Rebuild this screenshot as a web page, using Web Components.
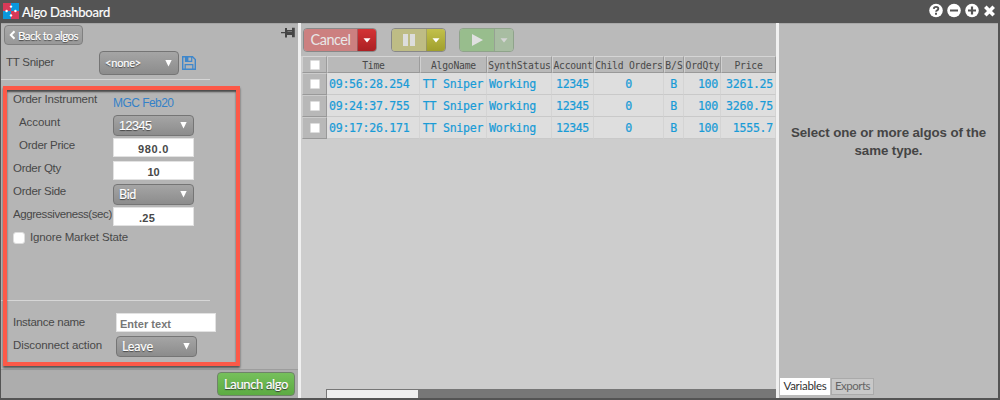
<!DOCTYPE html>
<html lang="en"><head><meta charset="utf-8"><title>Algo Dashboard</title>
<style>html,body{margin:0;width:1000px;height:400px;overflow:hidden;background:#545454;font-family:"Liberation Sans",Arial,sans-serif}</style></head>
<body><algo-dashboard></algo-dashboard>
<script>
const define=(name,html,setup)=>customElements.define(name,class extends HTMLElement{
  connectedCallback(){
    if(this.shadowRoot)return;
    const t=document.createElement('template');
    t.innerHTML=typeof html==='function'?html(this):html;
    this.attachShadow({mode:'open'}).append(t.content.cloneNode(true));
    if(setup)setup(this);
  }
});

// A single line of text tracked to an exact width (w, in px).
define('fit-text','<style>:host{display:inline-block;white-space:pre}</style><slot></slot>',el=>{
  const w=+el.getAttribute('w'),n=el.textContent.length;
  if(!w||!n)return;
  const r=document.createElement('span');
  const c=getComputedStyle(el);
  r.style.cssText='position:absolute;visibility:hidden;white-space:pre';
  r.style.font=c.font;r.textContent=el.textContent;
  document.body.append(r);
  const s=(w-r.getBoundingClientRect().width)/n;
  r.remove();
  el.style.letterSpacing=s.toFixed(3)+'px';
});

define('title-bar',`<style>
:host{display:flex;height:23px;background:#545454;color:#fff;align-items:flex-start;box-sizing:border-box;padding:0 3px}
.logo{margin-top:3px;width:16px;height:16px}
fit-text{font:13px/22px Lato,sans-serif;margin:1px 0 0 3px;-webkit-text-stroke:.2px #fff}
.ctl{margin-left:auto;width:70px;height:22px}
</style>
<svg class="logo" viewBox="0 0 16 16"><path fill="#d73a58" d="M0 0h8v8H0zM8 8h8v8H8z"/><path fill="#0b98dc" d="M8 0h8v8H8zM0 8h8v8H0z"/><g fill="#fff"><circle cx="8" cy="3.6" r="1.2"/><circle cx="3.6" cy="8" r="1.2"/><circle cx="12.4" cy="8" r="1.2"/><circle cx="8" cy="12.4" r="1.2"/></g></svg>
<fit-text w="88">Algo Dashboard</fit-text>
<svg class="ctl" viewBox="927 0 70 22"><g fill="#fff"><circle cx="936" cy="10.5" r="6.8"/><circle cx="954" cy="10.5" r="6.8"/><circle cx="972" cy="10.5" r="6.8"/></g>
<path d="M950 10.5h8M968 10.5h8M972 6.5v8" stroke="#545454" stroke-width="2.2"/>
<path d="M933.8 8.9q.2-2 2.2-2 2.3 0 2.3 1.8 0 1-1.2 1.6-1 .5-1 1.5" fill="none" stroke="#545454" stroke-width="1.9"/><path d="M935 12.8h2v1.9h-2z" fill="#545454"/>
<path d="M985.3 6.8l8.4 8.4M993.7 6.8l-8.4 8.4" stroke="#fff" stroke-width="3.6"/></svg>`);

define('drop-select',`<style>
:host{display:flex;box-sizing:border-box;width:81px;height:21px;border:1px solid #757575;border-radius:4px;background:linear-gradient(#a5a5a5,#8c8c8c);color:#fff;align-items:center;justify-content:space-between;padding:0 6px 0 5px;font:12.5px/18px Lato,sans-serif;-webkit-text-stroke:.2px #fff;text-shadow:0 1px 1px #444}
svg{width:7px;height:7px}</style><slot></slot><svg viewBox="0 0 7 7"><path d="M.3 0h6.4L3.5 6.5z" fill="#fff"/></svg>`);

define('text-field',`<style>
:host{display:flex;box-sizing:border-box;width:81px;height:19px;background:#fff;border:1px solid #e2e2e2;color:#484848;font:bold 11px/19px "Liberation Sans",sans-serif;justify-content:center;padding-top:1px}
</style><slot></slot>`);

define('check-box',`<style>:host{display:block;box-sizing:border-box;width:var(--s,12px);height:var(--s,12px);background:#fff;border:1px solid #ddd;border-radius:var(--r,3px)}</style>`);

define('field-row',el=>`<style>
:host{display:grid;grid-template-columns:100px 1fr;height:23px;color:#484848;font:11.5px/23px "Liberation Sans",sans-serif}
.l{overflow:hidden;width:99px;white-space:nowrap;padding-left:${el.hasAttribute('sub')?6:0}px;box-sizing:border-box}
.c{padding-top:4px;height:23px;box-sizing:border-box}
</style><div class="l"><fit-text w="${el.getAttribute('w')}">${el.getAttribute('label')}</fit-text></div><div class="c"><slot></slot></div>`);

define('algo-form',`<style>
:host{display:flex;flex-direction:column;position:relative;box-sizing:border-box;width:297px;height:375px;background:#b5b5b5;border-top:1px solid #a5a5a5;color:#484848;font-size:11.5px}
.top{height:22px;display:flex;justify-content:space-between;padding:1px 3px 0 3px;box-sizing:border-box}
.back{box-sizing:border-box;width:79px;height:20px;border:1px solid #808080;border-radius:4px;background:linear-gradient(#a8a8a8,#989898);display:flex;align-items:center;gap:2px;padding-left:4px;color:#fff;font:11.5px/17px Lato,sans-serif;text-shadow:0 1px 1px #444;-webkit-text-stroke:.2px #fff}
.pin{width:14px;height:11px;margin-top:2px}
.algo{height:33px;display:grid;grid-template-columns:93px 80px 20px;padding:5px 0 0 5px;box-sizing:border-box;line-height:22px}
.algo drop-select{height:24px;width:80px}
.save{width:14px;height:14px;margin:5px 0 0 3px}
hr{border:0;margin:0;width:209px;height:1px;background:#d6d6d6}
.fields{margin:8px 0 0 12px}
.ign{display:flex;height:23px;line-height:23px;gap:5px;align-items:center}
.more{margin:10px 0 0 12px}
.hr2{margin-top:51px}
.more field-row{grid-template-columns:103px 1fr}
.foot{margin-top:auto;height:29px;box-sizing:border-box;background:#adadad;border-top:1px solid #9d9d9d;display:flex;justify-content:flex-end;padding:2px 3px 0}
.go{box-sizing:border-box;width:78px;height:24px;border:1px solid #6f8369;border-radius:4px;background:linear-gradient(#76c05c,#5cab42);color:#fff;font:13px/22px Lato,sans-serif;text-shadow:0 1px 1px #333;-webkit-text-stroke:.2px #fff;text-align:center;white-space:nowrap}
.mark{position:absolute;left:2px;top:62px;width:237px;height:280px;box-sizing:border-box;border:4px solid #fd5948;box-shadow:0 2px 2px #0008,inset 0 2px 2px #0009;pointer-events:none}
</style>
<div class="top"><div class="back"><svg width="7" height="10" viewBox="0 0 7 10"><path d="M5.5 1.2L1.8 5l3.7 3.8" fill="none" stroke="#fff" stroke-width="2"/></svg><fit-text w="60">Back to algos</fit-text></div>
<svg class="pin" viewBox="0 0 14 11"><path d="M0 5h4V1h2v2h5V.8h2.8v9.4H11V8H6v2.5H4V6.2H0z" fill="#454545"/><path d="M6.5 4.5H11" stroke="#777"/></svg></div>
<div class="algo"><fit-text w="48">TT Sniper</fit-text><drop-select><fit-text w="36" style="font-size:11px">&lt;none&gt;</fit-text></drop-select>
<svg class="save" viewBox="0 0 14 14"><path d="M.7.7h9.8l2.8 2.8v9.8H.7z" fill="none" stroke="#3f87cb" stroke-width="1.4"/><path d="M3.5.7v4.6h6.2V.7M3.2 13.3V8.6h7.6v4.7" fill="none" stroke="#3f87cb" stroke-width="1.2"/><path d="M3.7 1h2.7v4H3.7z" fill="#3f87cb"/></svg></div>
<hr>
<div class="fields">
<field-row label="Order Instrument" w="84"><fit-text w="60.5" style="color:#3481c8;font-size:12px;line-height:18px">MGC Feb20</fit-text></field-row>
<field-row label="Account" w="41" sub><drop-select><fit-text w="32.5" style="font:12.5px 'Liberation Sans',sans-serif">12345</fit-text></drop-select></field-row>
<field-row label="Order Price" w="56" sub><text-field><fit-text w="31">980.0</fit-text></text-field></field-row>
<field-row label="Order Qty" w="48"><text-field><fit-text w="12">10</fit-text></text-field></field-row>
<field-row label="Order Side" w="53"><drop-select><fit-text w="17">Bid</fit-text></drop-select></field-row>
<field-row label="Aggressiveness(sec)" w="98.8"><text-field><fit-text w="16" style="margin-right:13px">.25</fit-text></text-field></field-row>
<div class="ign"><check-box></check-box><fit-text w="98">Ignore Market State</fit-text></div>
</div>
<hr class="hr2"><div class="more">
<field-row label="Instance name" w="72"><text-field style="width:100px;margin-top:-2px;justify-content:flex-start;padding-left:3px;color:#777"><fit-text w="51">Enter text</fit-text></text-field></field-row>
<field-row label="Disconnect action" w="89"><drop-select style="margin-top:-2px"><fit-text w="31">Leave</fit-text></drop-select></field-row>
</div>
<div class="foot"><div class="go"><fit-text w="64">Launch algo</fit-text></div></div>
<div class="mark"></div>`);

define('split-button',el=>`<style>
:host{display:grid;grid-template-columns:${el.getAttribute('main')||34}px 1fr;box-sizing:border-box;height:24px;border:1px solid #888;border-radius:4px;overflow:hidden;color:#e8e8e8}
.a{background:var(--a);display:flex;align-items:center;justify-content:center}.b{background:var(--b);border-left:1px solid #8888;display:flex;align-items:center;justify-content:center}
</style><div class="a"><slot></slot></div><div class="b"><svg width="8" height="5" viewBox="0 0 8 5"><path d="M.5.3h7L4 4.6z" fill="var(--c,#fff)"/></svg></div>`);

const cols=[['',25],['Time',93,22.5],['AlgoName',67,45],['SynthStatus',65,62.5],['Account',42,39],['Child Orders',70,67.5],['B/S',20,17.5],['OrdQty',37,34],['Price',55,28]];
const rows=[['09:56:28.254','3261.25'],['09:24:37.755','3260.75'],['09:17:26.171','1555.7']].map(([t,p])=>[t,'TT Sniper','Working','12345','0','B','100',p]);
define('order-grid',`<style>
:host{display:grid;grid-template-columns:${cols.map(c=>c[1]+'px').join(' ')};grid-template-rows:17px repeat(3,22px);font-family:"DejaVu Sans Mono",monospace}
div{box-sizing:border-box;display:flex;align-items:center;justify-content:center;min-width:0;white-space:nowrap}
.h{background:#b9b9b9;border:solid;border-width:1px;border-color:#d5d5d5 #9c9c9c #999 #d0d0d0;color:#484848;font-size:9.7px;padding-top:1px}
.k{background:#b8b8b8;border:solid;border-width:1px;border-color:#ccc #999 #999 #ccc}
.d{background:#dedede;border-bottom:1px solid #c9c9c9;border-right:1px solid #d4d4d4;color:#189bd7;font-size:11.6px;-webkit-text-stroke:.2px #189bd7;padding-top:1px}
.l{justify-content:flex-start;padding-left:2px}.r{justify-content:flex-end;padding-right:2px}
check-box{--s:10px;--r:1px}
</style>${cols.map((c,i)=>i?`<div class="h"><fit-text w="${c[2]}">${c[0]}</fit-text></div>`:'<div class="h" style="padding:0"><check-box></check-box></div>').join('')}
${rows.map(r=>'<div class="k"><check-box></check-box></div>'+r.map((v,i)=>`<div class="d ${i==0||i==2?'l':i>5?'r':''}"><fit-text w="${(v.length*(i==3?6.55:6.7)).toFixed(1)}">${v}</fit-text></div>`).join('')).join('')}`);

define('orders-panel',`<style>
:host{display:flex;flex-direction:column;width:475px;height:375px;background:#cdcdcd}
.bar{height:33px;box-sizing:border-box;background:#bababa;border-top:1px solid #aaa;display:flex;padding:4px 0 0 2px}
order-grid{padding-left:1px}
.scroll{margin:auto 0 0 25px;height:9px;background:#777;box-sizing:border-box;padding:1px}
.thumb{width:91px;height:8px;background:#eee}
</style><div class="bar">
<split-button main="53" style="width:74px;--a:#cc8080;--b:linear-gradient(#d43335,#ab2023)"><fit-text w="40" style="font:14.5px/20px Lato,sans-serif;margin-top:-1px">Cancel</fit-text></split-button>
<split-button style="width:55px;margin-left:14px;--a:#bebc85;--b:linear-gradient(#c2c04b,#a09f2d)"><svg width="12" height="12"><path d="M0 0h5v12H0zM7 0h5v12H7z" fill="#ddd"/></svg></split-button>
<split-button style="width:55px;margin-left:13px;--a:#98bd8d;--b:#a8bda2;--c:#d5d5d5;border-color:#8fa38b"><svg width="11" height="12"><path d="M0 0l11 6-11 6z" fill="#e0e0e0"/></svg></split-button>
</div><order-grid></order-grid><div class="scroll"><div class="thumb"></div></div>`);

define('variables-panel',`<style>
:host{display:flex;flex-direction:column;width:219px;height:375px;background:#bbb;box-sizing:border-box;border-top:1px solid #a8a8a8;color:#454545}
.msg{padding-top:100px;font:bold 13.3px/18px "Liberation Sans",sans-serif;text-align:center;flex:1}
.msg fit-text{display:block;width:max-content;margin:auto}
.tabs{display:flex;gap:1px;margin:0 0 3px 1px;font:11.5px/16px Lato,sans-serif}
.tab{box-sizing:border-box;height:17px;width:50px;background:#fff;text-align:center;color:#333}
.off{width:43px;background:#c8c8c8;border:1px solid #aaa;line-height:14px;color:#666}
</style><div class="msg"><fit-text w="195">Select one or more algos of the</fit-text><fit-text w="68">same type.</fit-text></div>
<div class="tabs"><div class="tab"><fit-text w="43">Variables</fit-text></div><div class="tab off"><fit-text w="35">Exports</fit-text></div></div>`);

define('algo-dashboard',`<style>
:host{display:block;width:1000px;height:400px;background:#545454}
.body{display:flex;padding-left:1px}
.split{width:3px;height:375px;background:#f0f0f0}
</style><title-bar></title-bar><div class="body"><algo-form></algo-form><div class="split"></div><orders-panel></orders-panel><div class="split"></div><variables-panel></variables-panel></div>`);
</script></body></html>
